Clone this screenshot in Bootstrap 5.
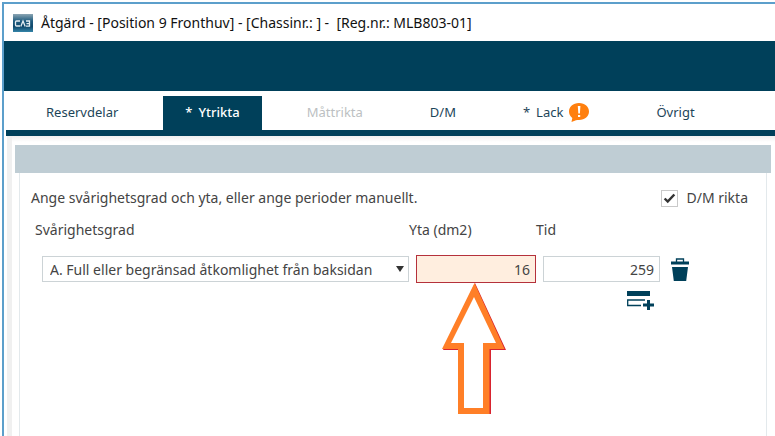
<!DOCTYPE html>
<html lang="sv">
<head>
<meta charset="utf-8">
<meta name="viewport" content="width=device-width, initial-scale=1">
<title>Åtgärd</title>
<link href="https://cdn.jsdelivr.net/npm/bootstrap@5.3.0/dist/css/bootstrap.min.css" rel="stylesheet">
<style>
:root { --petrol: #00405a; --steel: #bfcdd4; --ink: #444; }
body { font-family: "Noto Sans", "Open Sans", sans-serif; font-size: 14px; line-height: 20px; color: var(--ink); background: #fff; }
.app-window { margin: 2px 0 0 2px; border: solid #5c9fcb; border-width: 2px 0 0 2px; min-height: calc(100vh - 2px); }
.title-bar { height: 37px; padding: 0 9px; color: #111; }
.window-title { font-size: 14px; line-height: 20px; }
.banner { height: 50px; background: var(--petrol); }
.main-tabs { margin: 5px 0 0 2px; padding-left: 18px; gap: 23px; font-size: 13px; border-bottom: 6px solid var(--petrol); }
.main-tabs .nav-link { display: flex; align-items: center; gap: 6px; padding: 6px 22px 8px; border-radius: 0; color: #1d4559; }
.main-tabs .nav-link.active { background: var(--petrol); color: #fff; font-weight: 500; }
.main-tabs .nav-link.disabled { color: #bcbfc2; }
.work-area { margin-left: 3px; padding: 9px 4px 0 8px; background: linear-gradient(#f0f0f0, #f0f0f0) 0 0 / 5px 100% no-repeat, linear-gradient(#efefef, #fff 6px); }
.strip { height: 28px; background: var(--steel); }
.panel { margin: 0 4px; padding: 15px 18px 0 11px; border: solid #e3e9ec; border-width: 0 1px; }
.field-grid { display: grid; grid-template-columns: minmax(0, 367px) 120px 117px auto; column-gap: 7px; }
.heads { padding: 12px 0 0 4px; }
.values { padding: 15px 0 0 11px; align-items: center; justify-content: start; }
.box { height: 26px; padding: 0 5px; border: 1px solid #ccd3d6; border-radius: 0; font-size: 14px; color: var(--ink); background-color: #fff; }
select.box { padding-left: 7px; background: url("data:image/svg+xml,%3Csvg xmlns='http://www.w3.org/2000/svg' viewBox='0 0 8 6'%3E%3Cpath fill='%23333' d='M0 0h8L4 6z'/%3E%3C/svg%3E") right 4px center / 8px 6px no-repeat #fff; }
.box.marked { height: 28px; border-color: #b5313b; background: #ffeedf; }
.tick[type=checkbox] { width: 17px; height: 17px; margin: 0; border: 1px solid #c9c9c9; border-radius: 0; }
.tick[type=checkbox]:checked { border-color: #c9c9c9; background: url("data:image/svg+xml,%3Csvg xmlns='http://www.w3.org/2000/svg' viewBox='0 0 17 17'%3E%3Cpath fill='none' stroke='%23333' stroke-width='2.8' d='M3 8.5l3.500 3.500L14 4'/%3E%3C/svg%3E") center / 15px no-repeat #fff; }
.icon-btn { line-height: 0; color: var(--petrol); }
.add-row { padding: 6px 0 0 596px; }
.pointer { left: 26px; top: 28px; z-index: 2; pointer-events: none; }
</style>
<script src="https://cdn.jsdelivr.net/npm/bootstrap@5.3.0/dist/js/bootstrap.bundle.min.js"></script>
</head>
<body>
<div class="app-window d-flex flex-column">
  <header>
    <div class="title-bar d-flex align-items-center gap-2">
      <svg width="20" height="18" viewBox="0 0 20 18" aria-hidden="true">
        <defs><linearGradient id="logoFill" x2="0" y2="1"><stop offset="0" stop-color="#8ba5b3"/><stop offset=".4" stop-color="#1f5b7e"/><stop offset=".7" stop-color="#0e486b"/><stop offset="1" stop-color="#3585a9"/></linearGradient></defs>
        <path fill="url(#logoFill)" d="M0 0h20v18H0z"/>
        <path fill="none" stroke="#e4edf2" stroke-width="1.3" d="M7 7H3.500Q2.500 7 2.500 8v3q0 1 1 1H7M7.800 12.500 10 7l2.200 5.500M13 7h3.500v5.200H13M13.500 9.600h3"/>
      </svg>
      <h1 class="window-title m-0 fw-normal">Åtgärd - [Position 9 Fronthuv] - [Chassinr.: ] -&nbsp; [Reg.nr.: MLB803-01]</h1>
    </div>
    <div class="banner"></div>
  </header>
  <nav class="main-tabs nav flex-nowrap">
    <a class="nav-link" href="#">Reservdelar</a>
    <a class="nav-link active" href="#" aria-current="page"><span>*</span><span>Ytrikta</span></a>
    <a class="nav-link disabled" href="#" aria-disabled="true">Måttrikta</a>
    <a class="nav-link" href="#">D/M</a>
    <a class="nav-link" href="#"><span>*</span><span>Lack</span><svg width="20" height="19" viewBox="0 0 20 19" aria-hidden="true"><path fill="#ff7f0e" d="M10 0c6 0 10 3.800 10 8.500S16 17 10 17c-1.200 0-2 0-3 .3L2.500 19l.8-4C1 13.300 0 11 0 8.500 0 3.800 4 0 10 0z"/><path fill="#fff" d="M8.800 3h2.600l-.5 7.500H9.300zM9 12h2.200v2H9z"/></svg></a>
    <a class="nav-link" href="#">Övrigt</a>
  </nav>
  <main class="work-area d-flex flex-column flex-grow-1">
    <div class="strip"></div>
    <form class="panel flex-grow-1">
      <div class="d-flex justify-content-between align-items-center">
        <span>Ange svårighetsgrad och yta, eller ange perioder manuellt.</span>
        <div class="d-flex align-items-center gap-2">
          <input class="form-check-input tick" type="checkbox" id="dm" checked>
          <label for="dm">D/M rikta</label>
        </div>
      </div>
      <div class="field-grid heads">
        <label for="grade">Svårighetsgrad</label>
        <label for="area">Yta (dm2)</label>
        <label for="time">Tid</label>
      </div>
      <div class="field-grid values">
        <select class="form-select box" id="grade"><option>A. Full eller begränsad åtkomlighet från baksidan</option></select>
        <div class="position-relative">
          <input class="form-control box marked text-end" id="area" type="text" value="16">
          <svg class="pointer position-absolute" width="64" height="132" viewBox="0 0 64 132" aria-hidden="true">
            <path fill="#d8232f" d="M33 0 64 67H49v64H17V67H1z"/>
            <path fill="#ff7f27" d="M32.500 0 62.500 66H47.500v65H16V66H0z"/>
            <path fill="#fff" d="M32 14 54 60H41v65H22V60H9z"/>
          </svg>
        </div>
        <input class="form-control box text-end" id="time" type="text" value="259">
        <button class="btn p-0 border-0 icon-btn ms-1" type="button" aria-label="Ta bort rad">
          <svg width="18" height="23" viewBox="0 0 18 23"><path fill="none" stroke="currentColor" stroke-width="1.300" d="M5.500 4V1h7v3"/><path fill="currentColor" d="M0 3.500h18v3H0zM1 9h16l-1.800 14H2.800z"/></svg>
        </button>
      </div>
      <div class="add-row">
        <button class="btn p-0 border-0 icon-btn" type="button" aria-label="Lägg till rad">
          <svg width="27" height="19" viewBox="0 0 27 19"><path fill="currentColor" d="M0 0h23v5H0zM20 9h3v3.500h4v3h-4V19h-3v-3.500h-4v-3h4z"/><path fill="none" stroke="currentColor" stroke-width="1.300" d="M18 9H.7v5.500H14"/></svg>
        </button>
      </div>
    </form>
  </main>
</div>
</body>
</html>
